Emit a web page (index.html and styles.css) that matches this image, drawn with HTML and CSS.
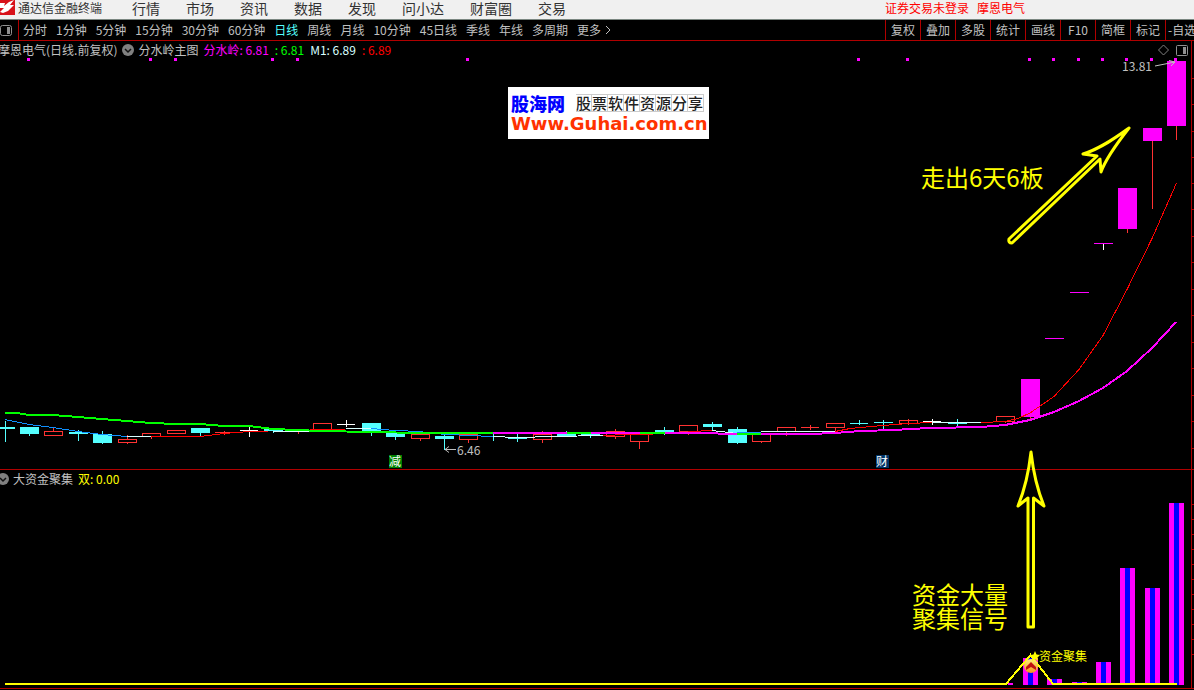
FILE: index.html
```
<!DOCTYPE html>
<html lang="zh-CN">
<head>
  <meta charset="UTF-8">
  <title>通达信金融终端</title>
  <link rel="stylesheet" href="styles.css">
</head>
<body>

  <!-- Title bar and main menu -->
  <header class="topbar">
    <svg class="logo" width="15" height="15" viewBox="0 0 15 15">
      <rect width="15" height="15" fill="#d8121a"/>
      <path d="M0 3L5 3L4 6L9 2L14 0L10 5L14 5L8 11L3 13L0 12L4 8L0 8Z" fill="#fff"/>
    </svg>
    <span class="app-name">通达信金融终端</span>
    <nav class="menu">
      <a href="#">行情</a>
      <a href="#">市场</a>
      <a href="#">资讯</a>
      <a href="#">数据</a>
      <a href="#">发现</a>
      <a href="#">问小达</a>
      <a href="#">财富圈</a>
      <a href="#">交易</a>
    </nav>
    <div class="account">
      <a href="#">证券交易未登录</a>
      <a href="#">摩恩电气</a>
    </div>
  </header>

  <!-- Period toolbar -->
  <div class="toolbar">
    <button class="side-toggle" aria-label="侧栏">
      <svg width="12" height="11" viewBox="0 0 12 11">
        <rect x="0.5" y="0.5" width="11" height="10" rx="2" fill="none" stroke="#909090"/>
        <rect x="7" y="2" width="3" height="7" fill="#909090"/>
      </svg>
    </button>
    <div class="periods">
      <button>分时</button>
      <button>1分钟</button>
      <button>5分钟</button>
      <button>15分钟</button>
      <button>30分钟</button>
      <button>60分钟</button>
      <button class="active">日线</button>
      <button>周线</button>
      <button>月线</button>
      <button>10分钟</button>
      <button>45日线</button>
      <button>季线</button>
      <button>年线</button>
      <button>多周期</button>
      <button class="more">更多
        <svg width="6" height="10" viewBox="0 0 6 10"><path d="M1 1L5 5L1 9" fill="none" stroke="#c0c0c0"/></svg>
      </button>
    </div>
    <div class="tools">
      <button>复权</button>
      <button>叠加</button>
      <button>多股</button>
      <button>统计</button>
      <button>画线</button>
      <button>F10</button>
      <button>简框</button>
      <button>标记</button>
      <button class="cut">-自选</button>
    </div>
  </div>

  <main class="charts">
    <!-- Price panel -->
    <section class="panel price">
      <div class="legend">
        <span class="stock">摩恩电气(日线.前复权)</span>
        <svg class="drop" width="12" height="12" viewBox="0 0 12 12">
          <circle cx="6" cy="6" r="6" fill="#808080"/>
          <path d="M3 5L6 8L9 5" fill="none" stroke="#111" stroke-width="1.5"/>
        </svg>
        <span class="indicator">分水岭主图</span>
        <span class="magenta">分水岭: 6.81</span>
        <span class="green">: 6.81</span>
        <span class="pale">M1: 6.89</span>
        <span class="red">: 6.89</span>
        <svg class="legend-icons" width="30" height="12" viewBox="0 0 30 12">
          <path d="M5.5 1L10.5 6L5.5 11L0.5 6Z" fill="none" stroke="#808080"/>
          <rect x="18.5" y="1.5" width="11" height="10" rx="1" fill="none" stroke="#909090"/>
          <rect x="25" y="3" width="3" height="7" fill="#909090"/>
        </svg>
      </div>
      <svg class="plot" viewBox="0 58 1194 411">
        <g shape-rendering="crispEdges">
          <!-- price axis -->
          <path class="axis" d="M1191.5 58V469M1192 78.5h2M1192 104.5h2M1192 131.5h2M1192 157.5h2M1192 183.5h2M1192 209.5h2M1192 236.5h2M1192 262.5h2M1192 289.5h2M1192 315.5h2M1192 342.5h2M1192 368.5h2M1192 395.5h2M1192 421.5h2M1192 448.5h2"/>
          <!-- signal dots -->
          <path class="fill-magenta" d="M27 58h3v3h-3zM149 58h3v3h-3zM174 58h3v3h-3zM271 58h3v3h-3zM296 58h3v3h-3zM466 58h3v3h-3zM857 58h3v3h-3zM906 58h3v3h-3zM1028 58h3v3h-3zM1052 58h3v3h-3zM1077 58h3v3h-3zM1101 58h3v3h-3zM1125 58h3v3h-3zM1150 58h3v3h-3zM1174 58h3v3h-3z"/>

          <!-- falling candles -->
          <path class="fill-cyan" d="M0 427h15v2h-15zM20 427h19v7h-19zM69 432h19v2h-19zM93 434h19v9h-19zM191 428h19v5h-19zM264 429h19v2h-19zM362 423h19v8h-19zM386 433h19v4h-19zM435 436h19v3h-19zM484 436h19v1h-19zM508 437h19v2h-19zM557 434h19v2h-19zM581 434h19v1h-19zM655 430h19v2h-19zM703 424h19v3h-19zM728 429h19v14h-19zM850 423h18v1h-18zM874 422h19v1h-19zM948 422h19v2h-19z"/>
          <path class="line cyan" d="M5.5 421V442M29.5 434V436M78.5 430V441M102.5 431V444M200.5 433V436M273.5 431V433M371.5 431V436M395.5 430V440M444.5 434V450M493.5 433V441M517.5 434V442M566.5 431V434M590.5 434V438M664.5 427V435M712.5 422V430M737.5 427V444M859.5 420V425M883.5 420V430M957.5 419V426"/>
          <!-- rising candles -->
          <path class="line candle-red" d="M44.5 431.5h18v4h-18zM118.5 439.5h18v3h-18zM142.5 433.5h18v3h-18zM167.5 430.5h18v3h-18zM313.5 423.5h18v6h-18zM411.5 434.5h18v4h-18zM459.5 434.5h18v5h-18zM533.5 434.5h18v5h-18zM606.5 431.5h18v5h-18zM630.5 434.5h18v7h-18zM679.5 425.5h18v6h-18zM752.5 433.5h18v8h-18zM777.5 427.5h18v4h-18zM826.5 423.5h18v4h-18zM899.5 420.5h18v3h-18zM996.5 416.5h18v5h-18z"/>
          <path class="line candle-red" d="M215 432.5h19M289 430.5h18M801 427.5h18M972 422.5h19M53.5 427V431M127.5 435V439M127.5 443V444M151.5 437V439M224.5 431V435M298.5 430V434M420.5 439V441M468.5 440V443M542.5 431V434M542.5 440V443M615.5 429V431M615.5 437V439M639.5 442V449M688.5 431V435M761.5 442V443M786.5 432V436M810.5 425V430M835.5 428V432M908.5 419V425M1005.5 422V423M1030.5 417V420M1127.5 229V233M1152.5 141V209M1176.5 126V140"/>
          <!-- flat candles -->
          <path class="line white" d="M240 430.5h18M249.5 427V437M337 424.5h18M346.5 420V427M923 421.5h18M932.5 419V425M1103.5 244V250"/>
          <!-- limit-up candles -->
          <path class="fill-magenta" d="M1021 379h19v38h-19zM1045 338h19v1h-19zM1070 292h19v1h-19zM1094 243h19v1h-19zM1118 188h19v41h-19zM1143 128h19v13h-19zM1167 61h19v65h-19z"/>

          <!-- M1 average -->
          <path class="line blue" d="M5 419.5L29 424.5L53 427.5L78 431.5L102 434.5L127 436.5M371 428.5L395 430.5L420 431.5L432 433.5L468 435.5L493 436.5M737 432.5H761"/>
          <path class="line pale" d="M127 436.5H151M273 431.5H310M346 428.5H371M493 436.5L517 437.5L553 436.5L603 435.5M712 430.5L737 433.5M761 431.5H835M932 422.5H981"/>
          <path class="line red" d="M151 436.5H200L224 433.5L249 431.5H268M310 429.5H345M603 435.5L627 434.5L681 433.5L690 431.5L712 430.5M835 431.5L850 428.5L883 425.5L908 423.5L932 422.5M981 422.5L1005 421.5L1018 418.5L1030 413L1054 396.5L1079 369.5L1103 335.5L1127 289.5L1152 238.5L1176.5 183"/>

          <!-- watershed line -->
          <path class="line thick green" d="M5 413H17L29 415H53L78 417L102 419L127 421L151 423L176 424H200L224 426H249L273 429L297 430L320 431L372 432L420 433H493M567 433H591M640 433H665"/>
          <path class="line thick magenta" d="M493 433H567M591 433H640M665 433H712L724 434H737M761 434H810L835 433L860 431L896 430L908 429L932 428L981 427L1005 425L1030 420L1054 412L1079 401L1103 388L1127 371L1152 348L1176 322"/>
          <path class="line thick green" d="M737 434H761"/>

          <!-- event marks -->
          <path d="M389 455h13v13h-13z" fill="#008000"/>
          <path d="M876 455h13v13h-13z" fill="#003468"/>
        </g>
        <text class="mark" x="389" y="466">减</text>
        <text class="mark" x="876" y="466">财</text>

        <!-- low and high labels -->
        <path class="pointer" d="M456 449.5H445M449 446.5L445 449.5L449 452.5"/>
        <text class="label" x="457" y="455">6.46</text>
        <path class="pointer" d="M1155 66L1175 62M1169 60.5L1175 62L1171 66"/>
        <text class="label" x="1122" y="71">13.81</text>
      </svg>
    </section>

    <!-- Capital gathering panel -->
    <section class="panel">
      <div class="legend">
        <svg class="drop first" width="12" height="12" viewBox="0 0 12 12">
          <circle cx="6" cy="6" r="6" fill="#808080"/>
          <path d="M3 5L6 8L9 5" fill="none" stroke="#111" stroke-width="1.5"/>
        </svg>
        <span class="indicator">大资金聚集</span>
        <span class="yellow">双: 0.00</span>
      </div>
      <svg class="plot" viewBox="0 487 1194 203">
        <defs>
          <linearGradient id="gold" x1="0" y1="0" x2="0" y2="1">
            <stop offset="0" stop-color="#fff27a"/>
            <stop offset="1" stop-color="#f5921a"/>
          </linearGradient>
        </defs>
        <g shape-rendering="crispEdges">
          <path class="axis" d="M0 688.5H1194M1191.5 487V688M1192 504.5h2M1192 519.5h2M1192 534.5h2M1192 549.5h2M1192 564.5h2M1192 579.5h2M1192 594.5h2M1192 609.5h2M1192 624.5h2M1192 639.5h2M1192 654.5h2"/>
          <path class="fill-magenta" d="M1008 683h5v2h-5zM1023 658h15v27h-15zM1047 679h15v6h-15zM1072 682h15v3h-15zM1096 662h15v23h-15zM1120 568h15v117h-15zM1145 588h15v97h-15zM1169 503h15v182h-15z"/>
          <path fill="#0000ff" d="M1028 658h5v27h-5zM1052 679h5v6h-5zM1077 682h5v3h-5zM1101 662h5v23h-5zM1125 568h5v117h-5zM1150 588h5v97h-5zM1174 503h5v182h-5z"/>
          <path class="line thick yellow" d="M5 684H1006L1030.5 655L1053 684H1177"/>
        </g>
        <circle cx="1031" cy="666" r="7" fill="url(#gold)"/>
        <path d="M1026 667L1031 662L1036 667V670L1031 667L1026 670Z" fill="#c01010"/>
        <path d="M1035 651L1036.5 654.5L1040 655L1037.5 657.5L1038 661L1035 659L1032 661L1032.5 657.5L1030 655L1033.5 654.5Z" fill="#ffff00"/>
        <text class="label yellow" x="1039" y="661">资金聚集</text>
      </svg>
    </section>

    <!-- Hand-drawn notes lying over both panels -->
    <svg class="notes" viewBox="0 41 1194 649">
      <path class="arrow" d="M1129 128C1118 136 1102 148 1083 154L1097 156L1009 239Q1008 243 1012 243L1100 159L1101 172C1106 158 1118 142 1129 128Z"/>
      <path class="arrow" d="M1031 452C1029 470 1025 489 1018 506L1028 498V627H1033.5V498L1044 506C1037 489 1033 470 1031 452Z"/>
      <text x="921" y="187">走出6天6板</text>
      <text x="912" y="604">资金大量</text>
      <text x="912" y="628">聚集信号</text>
    </svg>

    <a class="watermark" href="#">
      <span class="site"><b>股海网</b> <span class="slogan"><i>股</i><i>票</i><i>软</i><i>件</i><i>资</i><i>源</i><i>分</i><i>享</i></span></span>
      <span class="url">Www.Guhai.com.cn</span>
    </a>
  </main>

</body>
</html>
```
FILE: styles.css
```
* {
  box-sizing: border-box;
}

body {
  margin: 0;
  background: #000;
  color: #c0c0c0;
  font-family: "Noto Sans CJK SC", sans-serif;
  font-size: 12px;
  line-height: 16px;
}

a {
  color: inherit;
  text-decoration: none;
}

button {
  padding: 0;
  border: none;
  background: none;
  color: inherit;
  font: inherit;
  white-space: nowrap;
  cursor: pointer;
}

/* Title bar */
.topbar {
  display: flex;
  align-items: center;
  height: 20px;
  padding-bottom: 4px;
  background: #f0f0f0;
  border-bottom: 1px solid #7a8680;
  color: #333;
  white-space: nowrap;
}

.app-name {
  margin-left: 3px;
}

.menu {
  display: flex;
  gap: 26px;
  margin-left: 30px;
  font-size: 14px;
}

.account {
  display: flex;
  gap: 8px;
  margin-left: auto;
  margin-right: 169px;
  color: #f00;
}

/* Period toolbar */
.toolbar {
  display: flex;
  height: 21px;
  border-bottom: 1px solid #b00000;
  overflow: hidden;
}

.side-toggle {
  display: flex;
  align-items: center;
  width: 19px;
  border-right: 1px solid #b00000;
}

.periods {
  display: flex;
  gap: 9px;
  padding-left: 4px;
}

.periods .active {
  color: #54ffff;
}

.more {
  display: flex;
  align-items: center;
  gap: 4px;
}

.tools {
  display: flex;
  margin-left: auto;
}

.tools button {
  width: 35px;
  border-left: 1px solid #b00000;
}

.tools .cut {
  width: 29px;
  padding-left: 2px;
  text-align: left;
  overflow: hidden;
}

/* Chart panels */
.charts {
  position: relative;
}

.price {
  border-bottom: 1px solid #b00000;
}

.legend {
  display: flex;
  align-items: center;
  height: 17px;
  margin-right: 2px;
  border-right: 1px solid #b00000;
  white-space: nowrap;
  overflow: hidden;
}

.stock {
  margin-left: -2px;
}

.drop {
  margin: 0 4px 0 5px;
}

.drop.first {
  margin-left: -3px;
}

.indicator {
  margin-right: 5px;
}

.legend .magenta,
.legend .green,
.legend .pale {
  margin-right: 6px;
}

.legend-icons {
  margin-left: auto;
  margin-right: 3px;
}

.magenta { color: #f0f; }
.green { color: #0f0; }
.pale { color: #d8ffff; }
.red { color: #f00; }
.yellow { color: #ff0; }
.cyan { color: #54ffff; }
.blue { color: #1090ff; }
.white { color: #fff; }
.candle-red { color: #ff3232; }

.plot {
  display: block;
  width: 100%;
}

.axis {
  fill: none;
  stroke: #b00000;
}

.line {
  fill: none;
  stroke: currentColor;
}

.thick {
  stroke-width: 2px;
}

.fill-magenta {
  fill: #f0f;
}

.fill-cyan {
  fill: #54ffff;
}

.label {
  fill: currentColor;
}

.mark {
  fill: #fff;
}

.pointer {
  fill: none;
  stroke: #c0c0c0;
}

/* Notes */
.notes {
  position: absolute;
  top: 0;
  left: 0;
  width: 100%;
  fill: #ff0;
  font-size: 24px;
  pointer-events: none;
}

.arrow {
  fill: none;
  stroke: #ff0;
  stroke-width: 3px;
  stroke-linejoin: round;
}

.watermark {
  position: absolute;
  top: 46px;
  left: 508px;
  width: 201px;
  height: 52px;
  padding: 6px 3px;
  background: #fff;
  white-space: nowrap;
}

.site {
  display: flex;
  align-items: center;
  justify-content: space-between;
  height: 20px;
  color: #00f;
  font-size: 18px;
}

.site b {
  font-weight: 900;
}

.slogan {
  display: flex;
  margin-right: 2px;
  color: #222;
  font-size: 15px;
  font-weight: 500;
}

.slogan i {
  width: 16px;
  border: 1px solid #ccc;
  border-left: none;
  font-style: normal;
  text-align: center;
}

.url {
  display: block;
  height: 22px;
  color: #ff3200;
  font: bold 18px/22px "DejaVu Sans", sans-serif;
}
```
